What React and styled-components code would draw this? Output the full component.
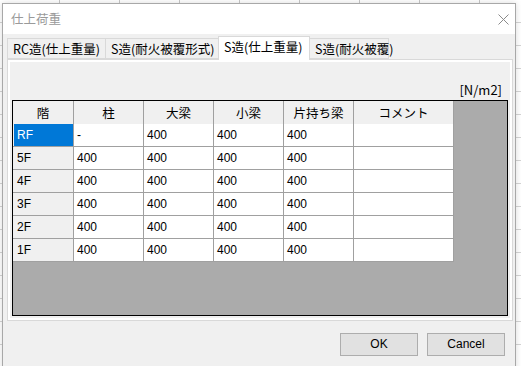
import React from "react";
import styled, { createGlobalStyle } from "styled-components";

const Global = createGlobalStyle`
  html, body { margin: 0; padding: 0; }
  body {
    width: 521px;
    height: 366px;
    overflow: hidden;
    background-color: #ffffff;
    background-image:
      repeating-linear-gradient(90deg, transparent 0 59px, #c8c8c8 59px 60px),
      repeating-linear-gradient(180deg, transparent 0 22px, #d4d4d4 22px 23px);
    font-family: "Noto Sans CJK JP", "Noto Sans", sans-serif;
  }
`;

const Page = styled.div`
  padding: 3px 0 0 2px;
  height: 366px;
  box-sizing: border-box;
`;

const Dialog = styled.div`
  width: 514px;
  height: 380px;
  box-sizing: border-box;
  border: 1px solid #a8a8a8;
  background: #f0f0f0;
  display: flex;
  flex-direction: column;
  box-shadow: 0 0 6px rgba(0,0,0,0.15);
`;

const TitleBar = styled.div`
  height: 30px;
  background: #ffffff;
  display: flex;
  align-items: center;
  justify-content: space-between;
  padding: 0 6px 0 8px;
`;

const Title = styled.span`
  font-size: 12.5px;
  color: #9a9a9a;
  line-height: 14px;
`;

const Close = styled.svg`
  width: 11px;
  height: 11px;
  display: block;
`;

const Body = styled.div`
  padding: 2px 2px 0 4px;
  display: flex;
  flex-direction: column;
`;

const TabStrip = styled.div`
  display: flex;
  align-items: flex-end;
  height: 23px;
  position: relative;
  z-index: 1;
`;

const Tab = styled.div`
  box-sizing: border-box;
  width: ${(p) => p.w}px;
  height: ${(p) => (p.active ? 24 : 21)}px;
  margin-left: ${(p) => (p.first ? 0 : -1)}px;
  margin-bottom: ${(p) => (p.active ? -1 : 0)}px;
  border: 1px solid #d9d9d9;
  border-bottom: ${(p) => (p.active ? "none" : "1px solid #d9d9d9")};
  background: ${(p) => (p.active ? "#ffffff" : "#f0f0f0")};
  font-size: 12.5px;
  line-height: 14px;
  color: #000;
  display: flex;
  align-items: center;
  padding: ${(p) => (p.active ? "0 0 3px 5px" : "0 0 0 5px")};
  white-space: nowrap;
  position: relative;
  z-index: ${(p) => (p.active ? 2 : 1)};
`;

const Panel = styled.div`
  width: 506px;
  height: 262px;
  box-sizing: border-box;
  border: 1px solid #d9d9d9;
  box-shadow: inset 0 0 0 2px #ffffff;
  background: #f0f0f0;
  padding: 22px 4px 0 4px;
  display: flex;
  flex-direction: column;
`;

const Unit = styled.div`
  align-self: flex-end;
  font-size: 13px;
  line-height: 15px;
  color: #000;
  margin-right: 6px;
  height: 18px;
`;

const Grid = styled.div`
  width: 496px;
  height: 216px;
  box-sizing: border-box;
  border: 1px solid #000;
  background: #ababab;
`;

const Table = styled.div`
  display: grid;
  grid-template-columns: 61px 70px 70px 70px 70px 100px;
  width: 441px;
`;

const HeadCell = styled.div`
  height: 23px;
  box-sizing: border-box;
  background: #f0f0f0;
  border-right: 1px solid #a0a0a0;
  font-size: 12.5px;
  line-height: 23px;
  text-align: center;
  color: #000;
`;

const Cell = styled.div`
  height: 23px;
  box-sizing: border-box;
  border-right: 1px solid #a0a0a0;
  border-bottom: 1px solid #a0a0a0;
  background: ${(p) => (p.selected ? "#0078d7" : p.label ? "#f0f0f0" : "#ffffff")};
  color: ${(p) => (p.selected ? "#ffffff" : "#000")};
  font-family: "Liberation Sans", Arial, sans-serif;
  font-size: 12px;
  line-height: 22px;
  padding-left: ${(p) => (p.label ? 4 : 3)}px;
  ${(p) => (p.selected ? "box-shadow: inset 1px 0 0 #f0f0f0;" : "")}
`;

const Buttons = styled.div`
  display: flex;
  justify-content: flex-end;
  gap: 9px;
  padding: 12px 8px 0 0;
`;

const Button = styled.button`
  width: 78px;
  height: 23px;
  box-sizing: border-box;
  border: 1px solid #adadad;
  background: #e1e1e1;
  font-family: "Liberation Sans", Arial, sans-serif;
  font-size: 12px;
  color: #000;
  padding: 0;
  line-height: 21px;
`;

const tabs = [
  { label: "RC造(仕上重量)", w: 99 },
  { label: "S造(耐火被覆形式)", w: 114 },
  { label: "S造(仕上重量)", w: 92, active: true },
  { label: "S造(耐火被覆)", w: 80 },
];

const heads = ["階", "柱", "大梁", "小梁", "片持ち梁", "コメント"];
const rows = [
  ["RF", "-", "400", "400", "400", ""],
  ["5F", "400", "400", "400", "400", ""],
  ["4F", "400", "400", "400", "400", ""],
  ["3F", "400", "400", "400", "400", ""],
  ["2F", "400", "400", "400", "400", ""],
  ["1F", "400", "400", "400", "400", ""],
];

export default function App() {
  return (
    <>
      <Global />
      <Page>
        <Dialog>
          <TitleBar>
            <Title>仕上荷重</Title>
            <Close viewBox="0 0 11 11">
              <path d="M0.5 0.5 L10.5 10.5 M10.5 0.5 L0.5 10.5" stroke="#8a8a8a" strokeWidth="1" fill="none" />
            </Close>
          </TitleBar>
          <Body>
            <TabStrip>
              {tabs.map((t, i) => (
                <Tab key={t.label} w={t.w} active={t.active} first={i === 0}>
                  {t.label}
                </Tab>
              ))}
            </TabStrip>
            <Panel>
              <Unit>[N/m2]</Unit>
              <Grid>
                <Table>
                  {heads.map((h) => (
                    <HeadCell key={h}>{h}</HeadCell>
                  ))}
                  {rows.map((r, ri) =>
                    r.map((v, ci) => (
                      <Cell
                        key={ri + "-" + ci}
                        label={ci === 0}
                        selected={ri === 0 && ci === 0}
                      >
                        {v}
                      </Cell>
                    ))
                  )}
                </Table>
              </Grid>
            </Panel>
            <Buttons>
              <Button>OK</Button>
              <Button>Cancel</Button>
            </Buttons>
          </Body>
        </Dialog>
      </Page>
    </>
  );
}
